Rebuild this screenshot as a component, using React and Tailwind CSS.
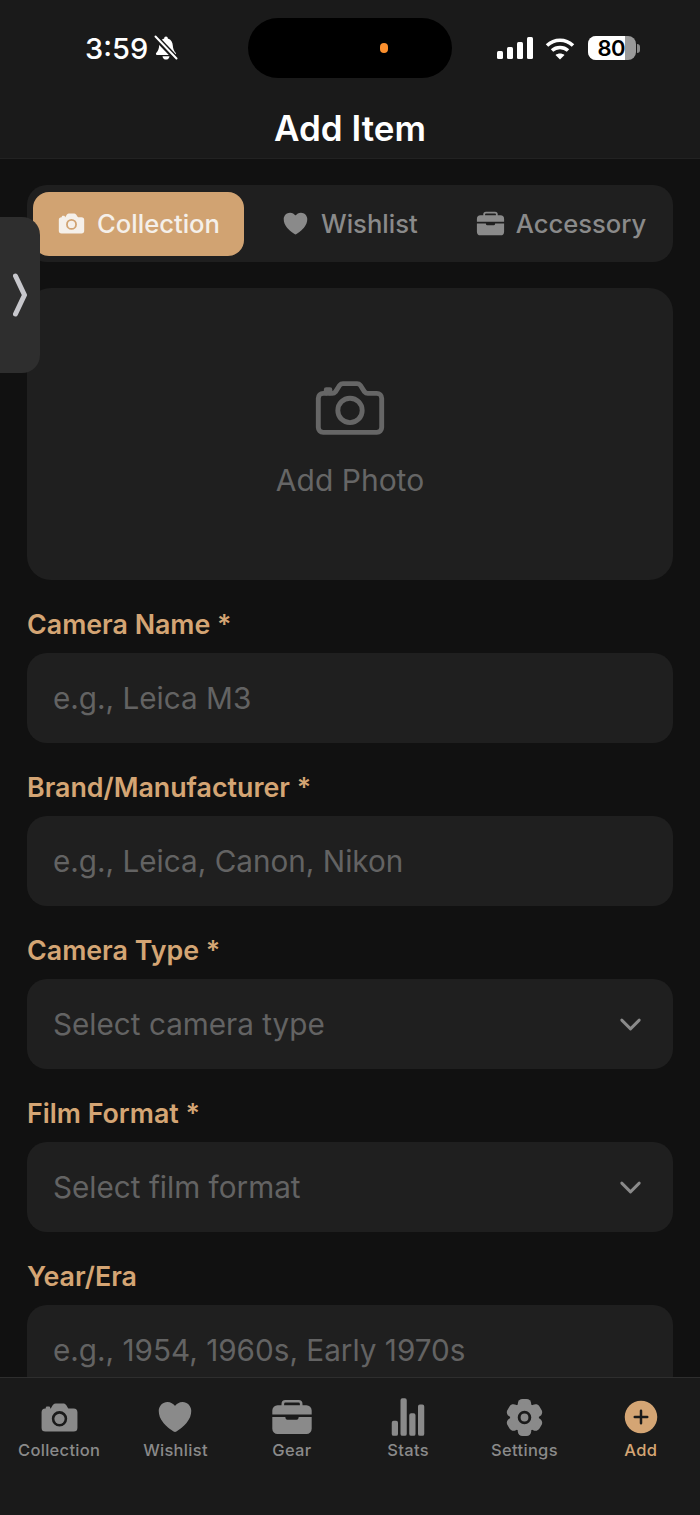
import React from 'react'
import {
  IoCamera,
  IoCameraOutline,
  IoHeart,
  IoBriefcase,
  IoStatsChart,
  IoAddCircle,
  IoChevronDown,
} from 'react-icons/io5'

const font = { fontFamily: 'Inter, "Liberation Sans", sans-serif' }

function BellSlash() {
  return (
    <svg viewBox="0 0 24 26" className="ml-[6px] h-[26px] w-[24px]">
      <path
        d="M12 1.5C10.8 1.5 10.2 2.4 10.2 3.4C6.8 4.4 5.4 7.2 5.2 10.5C5 14 4 16 2.2 18C1.6 18.7 2 20 3 20H21C22 20 22.4 18.7 21.8 18C20 16 19 14 18.8 10.5C18.6 7.2 17.2 4.4 13.8 3.4C13.8 2.4 13.2 1.5 12 1.5Z"
        fill="#fff"
      />
      <path d="M8.5 21.2H15.5C15.2 23.4 13.8 24.6 12 24.6C10.2 24.6 8.8 23.4 8.5 21.2Z" fill="#fff" />
      <path d="M2 2.5L22 23.5" stroke="#1a1a1a" strokeWidth="5.5" />
      <path d="M1.5 1.5L22.5 23.5" stroke="#fff" strokeWidth="2" strokeLinecap="round" />
    </svg>
  )
}

function StatusBar() {
  return (
    <div className="flex h-[78px] items-end">
      <div className="flex h-[60px] w-[248px] items-center pl-[85px] text-white">
        <span className="text-[29px] leading-none font-medium">3:59</span>
        <BellSlash />
      </div>
      <div className="flex h-[60px] w-[204px] items-center rounded-[30px] bg-black pl-[132px]">
        <div className="h-[10px] w-[8px] rounded-full bg-[#fb8f2d]" />
      </div>
      <div className="flex h-[60px] items-center pl-[45px]">
        <svg viewBox="0 0 36 22" className="h-[22px] w-[36px]" fill="#fff">
          <rect x="0" y="14" width="6" height="8" rx="1.5" />
          <rect x="10" y="10" width="6" height="12" rx="1.5" />
          <rect x="20" y="5" width="6" height="17" rx="1.5" />
          <rect x="30" y="0" width="6" height="22" rx="1.5" />
        </svg>
        <svg viewBox="0 0 30 24" className="ml-[12px] h-[24px] w-[30px]" fill="none" stroke="#fff" strokeWidth="3.6">
          <path d="M2 9.5C9.5 2.5 20.5 2.5 28 9.5" />
          <path d="M7 14.5C11.5 10.5 18.5 10.5 23 14.5" />
          <path d="M15 23.5L10.5 19C13 17 17 17 19.5 19Z" fill="#fff" stroke="none" />
        </svg>
        <div className="ml-[13px] flex h-[24px] w-[48px] rounded-[8px] bg-[#9a9a9a]">
          <div className="flex w-[37px] items-center justify-end rounded-l-[8px] bg-white text-[22px] leading-none font-semibold tracking-[-0.5px] text-black">
            80
          </div>
        </div>
        <div className="ml-[1px] h-[9px] w-[3px] rounded-r-full bg-[#8a8a8a]" />
      </div>
    </div>
  )
}

function Gear({ className }) {
  return (
    <svg viewBox="0 0 36 36" className={className} fill="currentColor">
      <rect x="11.5" y="0" width="13" height="36" rx="4.5" />
      <rect x="11.5" y="0" width="13" height="36" rx="4.5" transform="rotate(60 18 18)" />
      <rect x="11.5" y="0" width="13" height="36" rx="4.5" transform="rotate(120 18 18)" />
      <circle cx="18" cy="18" r="14" />
      <circle cx="18" cy="18" r="5.2" fill="none" stroke="#1a1a1a" strokeWidth="2.8" />
    </svg>
  )
}

function Tab({ icon: Icon, label, active, className }) {
  return (
    <div
      className={
        active
          ? 'flex h-[64px] w-[211px] items-center justify-center gap-[11px] rounded-[16px] bg-[#d1a372] text-[#f5f0ea]'
          : `flex h-[64px] items-center gap-[11px] text-[#8a8a8a] ${className}`
      }
    >
      <Icon className="h-[29px] w-[29px]" />
      <span className="text-[25.6px] leading-none font-medium">{label}</span>
    </div>
  )
}

function Field({ label, placeholder }) {
  return (
    <div className="mt-[28px]">
      <label className="block text-[26.8px] leading-[32px] font-semibold text-[#d4a574]">{label}</label>
      <input
        readOnly
        placeholder={placeholder}
        className="mt-[13px] block h-[90px] w-full rounded-[20px] bg-[#1f1f1f] px-[26px] text-[29.7px] outline-none placeholder:text-[#636363]"
      />
    </div>
  )
}

function SelectField({ label, placeholder }) {
  return (
    <div className="mt-[28px]">
      <label className="block text-[26.8px] leading-[32px] font-semibold text-[#d4a574]">{label}</label>
      <div className="mt-[13px] flex h-[90px] items-center justify-between rounded-[20px] bg-[#1f1f1f] pr-[27px] pl-[26px]">
        <span className="text-[29.7px] text-[#636363]">{placeholder}</span>
        <IoChevronDown className="h-[31px] w-[31px] text-[#8a8a8a]" />
      </div>
    </div>
  )
}

function NavItem({ icon: Icon, label, active, size }) {
  return (
    <div className={`flex flex-1 flex-col items-center ${active ? 'text-[#d4a574]' : 'text-[#8a8a8a]'}`}>
      <div className="flex h-[40px] items-center justify-center">
        <Icon className={size} />
      </div>
      <span className="mt-[3px] text-[16.5px] leading-[20px] font-medium tracking-[0.3px]">{label}</span>
    </div>
  )
}

export default function App() {
  return (
    <div style={font} className="relative flex h-[1515px] w-[700px] flex-col overflow-hidden bg-[#111111]">
      <header className="h-[159px] shrink-0 border-b border-[#222222] bg-[#1a1a1a]">
        <StatusBar />
        <h1 className="mt-[30px] text-center text-[35px] leading-[40px] font-semibold text-white">Add Item</h1>
      </header>

      <main className="flex-1 overflow-hidden px-[27px] pt-[26px]">
        <div className="flex h-[77px] items-center rounded-[20px] bg-[#1f1f1f] pl-[6px]">
          <Tab icon={IoCamera} label="Collection" active />
          <Tab icon={IoHeart} label="Wishlist" className="ml-[37px]" />
          <Tab icon={IoBriefcase} label="Accessory" className="ml-[58px]" />
        </div>

        <div className="mt-[26px] flex h-[292px] flex-col items-center rounded-[24px] bg-[#1f1f1f] pt-[81px]">
          <IoCameraOutline className="h-[78px] w-[78px] text-[#666666]" />
          <span className="mt-[15px] text-[30px] leading-[36px] text-[#666666]">Add Photo</span>
        </div>

        <Field label="Camera Name *" placeholder="e.g., Leica M3" />
        <Field label="Brand/Manufacturer *" placeholder="e.g., Leica, Canon, Nikon" />
        <SelectField label="Camera Type *" placeholder="Select camera type" />
        <SelectField label="Film Format *" placeholder="Select film format" />
        <Field label="Year/Era" placeholder="e.g., 1954, 1960s, Early 1970s" />
      </main>

      <nav className="flex h-[138px] shrink-0 border-t border-[#2e2e2e] bg-[#1a1a1a] px-[1px] pt-[19px]">
        <NavItem icon={IoCamera} label="Collection" size="h-[41px] w-[41px]" />
        <NavItem icon={IoHeart} label="Wishlist" size="h-[40px] w-[40px]" />
        <NavItem icon={IoBriefcase} label="Gear" size="h-[42px] w-[42px]" />
        <NavItem icon={IoStatsChart} label="Stats" size="h-[40px] w-[40px]" />
        <NavItem icon={Gear} label="Settings" size="h-[37px] w-[37px]" />
        <NavItem icon={IoAddCircle} label="Add" active size="h-[40px] w-[40px]" />
      </nav>

      {/* side drawer handle sits over the form */}
      <div className="absolute top-[217px] left-0 flex h-[156px] w-[40px] items-center rounded-r-[18px] bg-[#2e2e2e] pl-[13px]">
        <svg viewBox="0 0 14 44" className="h-[44px] w-[14px]" fill="none" stroke="#c7c7cc" strokeWidth="5" strokeLinecap="round" strokeLinejoin="round">
          <path d="M2.5 3L11.5 22L2.5 41" />
        </svg>
      </div>
    </div>
  )
}
